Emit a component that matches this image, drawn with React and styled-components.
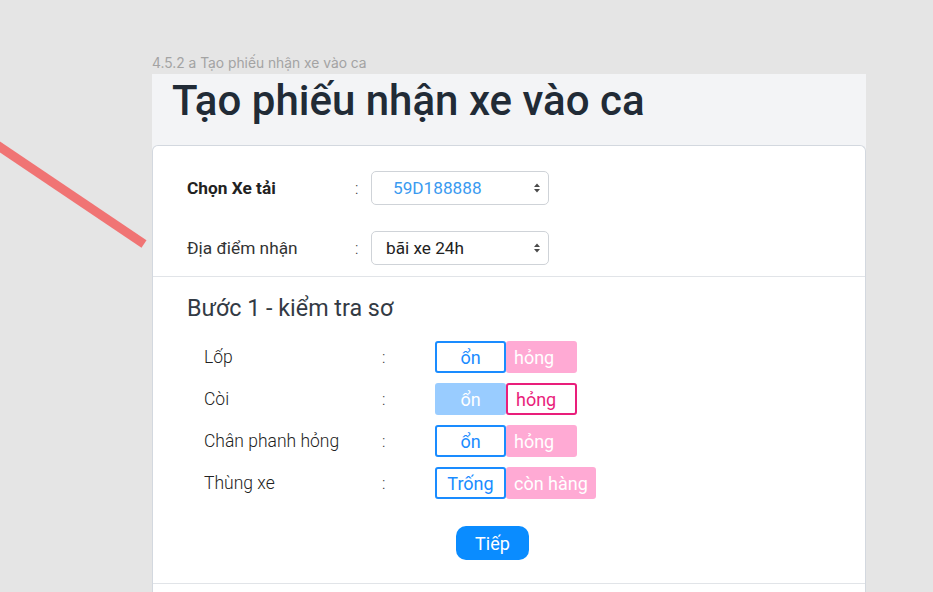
import React from 'react'
import styled, { createGlobalStyle } from 'styled-components'

const GlobalStyle = createGlobalStyle`
    html, body {
        margin: 0;
        padding: 0;
        background-color: #e5e5e5;
        font-family: Roboto, "Noto Sans", sans-serif;
    }
`

const checks = [
    { name: 'Lốp', left: 'ổn', right: 'hỏng', state: 'ok' },
    { name: 'Còi', left: 'ổn', right: 'hỏng', state: 'bad' },
    { name: 'Chân phanh hỏng', left: 'ổn', right: 'hỏng', state: 'ok' },
    { name: 'Thùng xe', left: 'Trống', right: 'còn hàng', state: 'ok', wide: true },
]

function SelectArrows() {
    return (
        <svg width="8" height="12" viewBox="0 0 8 12">
            <path d="M4 1.5 L7 5 L1 5 Z" fill="#4a4a4a" />
            <path d="M4 10.5 L7 7 L1 7 Z" fill="#4a4a4a" />
        </svg>
    )
}

export default function App() {
    return (
        <Canvas>
            <GlobalStyle />
            <Connector width="160" height="260" viewBox="0 0 160 260">
                <line x1="-20" y1="133.5" x2="144" y2="244" stroke="#f07474" strokeWidth="9" />
            </Connector>

            <FrameLabel>4.5.2 a Tạo phiếu nhận xe vào ca</FrameLabel>
            <Frame>
                <Header>
                    <Title>Tạo phiếu nhận xe vào ca</Title>
                </Header>

                <Card>
                    <FormSection>
                        <FormRow>
                            <FieldLabel bold>Chọn Xe tải</FieldLabel>
                            <Colon>:</Colon>
                            <SelectBox>
                                <SelectValue blue indent={21}>59D188888</SelectValue>
                                <SelectArrows />
                            </SelectBox>
                        </FormRow>
                        <FormRow>
                            <FieldLabel>Địa điểm nhận</FieldLabel>
                            <Colon>:</Colon>
                            <SelectBox>
                                <SelectValue indent={14}>bãi xe 24h</SelectValue>
                                <SelectArrows />
                            </SelectBox>
                        </FormRow>
                    </FormSection>

                    <StepSection>
                        <StepTitle>Bước 1 - kiểm tra sơ</StepTitle>
                        <CheckList>
                            {checks.map((c, i) => (
                                <CheckRow key={i}>
                                    <CheckName>{c.name}</CheckName>
                                    <Colon>:</Colon>
                                    <Toggle>
                                        <ToggleOption variant={c.state === 'ok' ? 'blueOutline' : 'blueFill'}>{c.left}</ToggleOption>
                                        <ToggleOption variant={c.state === 'bad' ? 'pinkOutline' : 'pinkFill'} wide={c.wide}>{c.right}</ToggleOption>
                                    </Toggle>
                                </CheckRow>
                            ))}
                        </CheckList>
                        <Actions>
                            <NextButton>Tiếp</NextButton>
                        </Actions>
                    </StepSection>
                    <Bottom />
                </Card>
            </Frame>
        </Canvas>
    )
}

const Canvas = styled.div`
    position: relative;
    width: 933px;
    height: 592px;
    overflow: hidden;
    padding: 55px 0 0 152px;
    box-sizing: border-box;
`

const Connector = styled.svg`
    position: absolute;
    left: 0;
    top: 0;
`

const FrameLabel = styled.div`
    font-family: Inter, "Noto Sans", sans-serif;
    font-size: 13.8px;
    line-height: 17px;
    color: #a3a3a3;
    height: 19px;
`

const Frame = styled.div`
    width: 714px;
    background-color: #f3f4f6;
`

const Header = styled.div`
    height: 71px;
    padding-left: 20px;
    box-sizing: border-box;
`

const Title = styled.h1`
    margin: 0;
    font-size: 42px;
    line-height: 50px;
    padding-top: 2px;
    font-weight: 500;
    color: #212b36;
`

const Card = styled.div`
    background-color: #ffffff;
    border: 1px solid #d3d8df;
    border-bottom: none;
    border-radius: 6px 6px 0 0;
`

const FormSection = styled.div`
    display: flex;
    flex-direction: column;
    gap: 26px;
    padding: 25px 0 11px 34px;
    border-bottom: 1px solid #e1e4e8;
`

const FormRow = styled.div`
    display: grid;
    grid-template-columns: 168px 16px 178px;
    align-items: center;
    height: 34px;
`

const FieldLabel = styled.div`
    font-size: 17.3px;
    font-weight: ${props => props.bold ? 700 : 400};
    color: ${props => props.bold ? '#222' : '#333'};
`

const Colon = styled.div`
    font-size: 16px;
    font-weight: 300;
    color: #333;
`

const SelectBox = styled.div`
    display: flex;
    align-items: center;
    justify-content: space-between;
    height: 34px;
    padding-right: 7px;
    border: 1px solid #cfd3d8;
    border-radius: 5px;
    box-sizing: border-box;
    background-color: #fff;
`

const SelectValue = styled.span`
    padding-left: ${props => props.indent}px;
    font-size: 17.2px;
    color: ${props => props.blue ? '#3a9af0' : '#222'};
`

const StepSection = styled.div`
    padding: 18px 0 23px 34px;
    border-bottom: 1px solid #e1e4e8;
`

const StepTitle = styled.h2`
    margin: 0;
    font-size: 23.3px;
    line-height: 26px;
    font-weight: 400;
    color: #333a44;
`

const CheckList = styled.div`
    display: flex;
    flex-direction: column;
    gap: 10px;
    margin-top: 20px;
    padding-left: 17px;
`

const CheckRow = styled.div`
    display: grid;
    grid-template-columns: 178px 53px auto;
    align-items: center;
    height: 32px;
`

const CheckName = styled.div`
    font-size: 17.5px;
    font-weight: 300;
    color: #222;
`

const Toggle = styled.div`
    display: flex;
`

const variants = {
    blueOutline: 'background: #fff; color: #1a8cff; border: 2px solid #1a8cff; justify-content: center;',
    blueFill: 'background: #99ccff; color: #fff; border: 2px solid #99ccff; justify-content: center;',
    pinkOutline: 'background: #fff; color: #e91e7b; border: 2px solid #e91e7b; padding-left: 8px;',
    pinkFill: 'background: #ffaad4; color: #fff; border: 2px solid #ffaad4; padding-left: 6px;',
}

const ToggleOption = styled.div`
    display: flex;
    align-items: center;
    width: ${props => props.wide ? 90 : 71}px;
    height: 32px;
    box-sizing: border-box;
    border-radius: 3px;
    font-size: 18px;
    ${props => variants[props.variant]}
`

const Actions = styled.div`
    padding: 27px 0 0 269px;
`

const NextButton = styled.button`
    width: 73px;
    height: 34px;
    padding: 0;
    border: none;
    border-radius: 10px;
    background-color: #0a8cff;
    color: #fff;
    font-family: Roboto, sans-serif;
    font-size: 18px;
    cursor: pointer;
`

const Bottom = styled.div`
    height: 40px;
`
